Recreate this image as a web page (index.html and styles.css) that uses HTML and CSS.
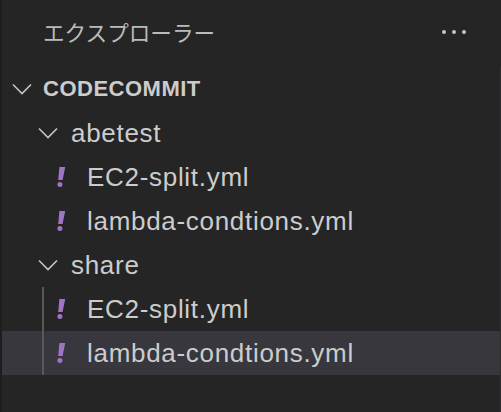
FILE: index.html
```html
<!DOCTYPE html>
<html lang="ja">
<head>
<meta charset="utf-8">
<link rel="stylesheet" href="styles.css">
</head>
<body>
<div class="sidebar">
  <div class="header">
    <span class="title">エクスプローラー</span>
    <span class="more"><i></i><i></i><i></i></span>
  </div>
  <div class="tree">
    <div class="row lvl0">
      <svg class="twistie" width="20" height="20" viewBox="0 0 20 20"><path d="M1 5.5 L10 14.5 L19 5.5" fill="none" stroke="#c5c5c5" stroke-width="1.6"/></svg>
      <span class="label section">CODECOMMIT</span>
    </div>
    <div class="row lvl1">
      <svg class="twistie" width="20" height="20" viewBox="0 0 20 20"><path d="M1 5.5 L10 14.5 L19 5.5" fill="none" stroke="#c5c5c5" stroke-width="1.6"/></svg>
      <span class="label">abetest</span>
    </div>
    <div class="row lvl2">
      <svg class="yml" width="10" height="22" viewBox="0 0 10 22"><polygon points="3.4,1 9.2,1 6.6,14 2.2,14" fill="#a074c4"/><circle cx="3.9" cy="18.6" r="2.5" fill="#a074c4"/></svg>
      <span class="label">EC2-split.yml</span>
    </div>
    <div class="row lvl2">
      <svg class="yml" width="10" height="22" viewBox="0 0 10 22"><polygon points="3.4,1 9.2,1 6.6,14 2.2,14" fill="#a074c4"/><circle cx="3.9" cy="18.6" r="2.5" fill="#a074c4"/></svg>
      <span class="label">lambda-condtions.yml</span>
    </div>
    <div class="row lvl1">
      <svg class="twistie" width="20" height="20" viewBox="0 0 20 20"><path d="M1 5.5 L10 14.5 L19 5.5" fill="none" stroke="#c5c5c5" stroke-width="1.6"/></svg>
      <span class="label">share</span>
    </div>
    <div class="group">
      <div class="row lvl2">
        <svg class="yml" width="10" height="22" viewBox="0 0 10 22"><polygon points="3.4,1 9.2,1 6.6,14 2.2,14" fill="#a074c4"/><circle cx="3.9" cy="18.6" r="2.5" fill="#a074c4"/></svg>
        <span class="label">EC2-split.yml</span>
      </div>
      <div class="row lvl2 hover">
        <svg class="yml" width="10" height="22" viewBox="0 0 10 22"><polygon points="3.4,1 9.2,1 6.6,14 2.2,14" fill="#a074c4"/><circle cx="3.9" cy="18.6" r="2.5" fill="#a074c4"/></svg>
        <span class="label">lambda-condtions.yml</span>
      </div>
    </div>
  </div>
</div>
</body>
</html>
```

FILE: styles.css
```css
html, body {
  margin: 0;
  padding: 0;
  background: #252526;
}
body {
  width: 501px;
  height: 412px;
  overflow: hidden;
}
.sidebar {
  height: 412px;
  border-left: 2px solid #1d1d1e;
  box-sizing: border-box;
  font-family: "Liberation Sans", Arial, "Noto Sans CJK JP", sans-serif;
}
.header {
  height: 67px;
  box-sizing: border-box;
  display: flex;
  align-items: center;
  justify-content: space-between;
  padding: 0 35px 4px 41px;
}
.title {
  font-family: "Noto Sans CJK JP", sans-serif;
  font-size: 21.6px;
  color: #bbbbbb;
  line-height: 1;
}
.more {
  display: flex;
  gap: 6px;
}
.more i {
  width: 4px;
  height: 4px;
  border-radius: 50%;
  background: #c5c5c5;
}
.tree {
  border-right: 1px solid #2e2e30;
  height: 345px;
}
.row {
  display: flex;
  align-items: center;
  height: 44px;
  color: #cccccc;
  font-size: 26px;
  letter-spacing: 0.7px;
  white-space: nowrap;
}
.twistie {
  flex: none;
}
.lvl0 { padding-left: 10px; }
.lvl0 .label { margin-left: 11px; }
.lvl1 { padding-left: 36px; }
.lvl1 .label { margin-left: 13px; }
.lvl2 { padding-left: 54px; }
.lvl2 .label { margin-left: 21px; }
.yml { flex: none; }
.section {
  font-weight: bold;
  font-size: 22px;
  letter-spacing: 0.5px;
}
.group {
  position: relative;
}
.group::before {
  content: "";
  position: absolute;
  left: 40px;
  top: 0;
  bottom: 0;
  width: 2px;
  background: #585858;
  z-index: 1;
}
.hover {
  background: #37373d;
}
```
